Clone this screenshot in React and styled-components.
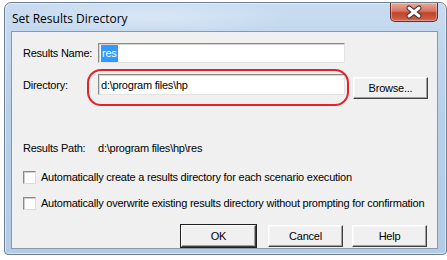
import styled, { createGlobalStyle } from "styled-components";

const GlobalStyle = createGlobalStyle`
    body {
        margin: 0;
        background: #ffffff;
        font-family: 'Liberation Sans', Arial, sans-serif;
    }
`

export default function App() {
    return (
        <Desktop>
            <GlobalStyle />
            <Window>
                <TitleBar>
                    <Title>Set Results Directory</Title>
                    <CloseButton>
                        <svg width="46" height="18" viewBox="0 0 46 18">
                            <path d="M18 5 L28 13 M28 5 L18 13" stroke="#3b2a2a" strokeWidth="5" strokeLinecap="round" />
                            <path d="M18 5 L28 13 M28 5 L18 13" stroke="#ffffff" strokeWidth="3" strokeLinecap="round" />
                        </svg>
                    </CloseButton>
                </TitleBar>
                <Content>
                    <Form>
                        <Label>Results Name:</Label>
                        <TextBox>
                            <Selected>res</Selected>
                        </TextBox>
                        <span />

                        <Label>Directory:</Label>
                        <Highlighted>
                            <TextBox>d:\program files\hp</TextBox>
                            <Ring />
                        </Highlighted>
                        <Button width={75} top={3} left={8}>Browse...</Button>
                    </Form>

                    <PathRow>
                        <PathLabel>Results Path:</PathLabel>
                        <span>d:\program files\hp\res</span>
                    </PathRow>

                    <Option top={16}>
                        <CheckBox />
                        Automatically create a results directory for each scenario execution
                    </Option>
                    <Option top={13}>
                        <CheckBox />
                        Automatically overwrite existing results directory without prompting for confirmation
                    </Option>

                    <Buttons>
                        <Button width={75} isDefault>OK</Button>
                        <Button width={75} left={12}>Cancel</Button>
                        <Button width={75} left={9}>Help</Button>
                    </Buttons>
                </Content>
            </Window>
        </Desktop>
    );
}

const Desktop = styled.div`
    width: 447px;
    height: 260px;
    overflow: hidden;
    box-sizing: border-box;
    padding: 2px 0 0 4px;
    background: #ffffff;
`
const Window = styled.div`
    width: 443px;
    height: 253px;
    box-sizing: border-box;
    display: flex;
    flex-direction: column;
    padding: 0 8px 5px 6px;
    border: 1px solid #6d7e92;
    border-radius: 7px 7px 4px 4px;
    background:
        radial-gradient(ellipse 140px 18px at 150px 14px, rgba(255,255,255,0.35), transparent),
        linear-gradient(180deg, #c8dcf1 0%, #b9d0e9 40%, #b3cbe5 100%);
    box-shadow: inset 0 0 0 1px rgba(255,255,255,0.5);
`
const TitleBar = styled.div`
    height: 28px;
    display: flex;
    justify-content: space-between;
    align-items: flex-start;
`
const Title = styled.div`
    margin: 7px 0 0 1px;
    font-family: 'Open Sans', 'Noto Sans', sans-serif;
    font-size: 12px;
    color: #000000;
`
const CloseButton = styled.div`
    width: 46px;
    height: 18px;
    border: 1px solid #6b2a22;
    border-top: none;
    border-radius: 0 0 5px 5px;
    background: linear-gradient(180deg, #e9a99a 0%, #d8735f 45%, #c0432c 55%, #d0664f 100%);
    box-shadow: inset 0 0 0 1px rgba(255,255,255,0.35);
    display: flex;
    align-items: center;
    justify-content: center;
    svg { display: block; }
`
const Content = styled.div`
    flex: 1;
    display: flex;
    flex-direction: column;
    background: #f0f0f0;
    border: 1px solid #8799b0;
    padding: 11px 10px 0 11px;
    font-size: 11px;
    letter-spacing: -0.23px;
    color: #000000;
`
const Form = styled.div`
    display: grid;
    grid-template-columns: 75px 247px auto;
    grid-template-rows: 20px 21px;
    row-gap: 11px;
    align-items: center;
`
const Label = styled.span`
    white-space: nowrap;
`
const TextBox = styled.div`
    height: 100%;
    box-sizing: border-box;
    display: flex;
    align-items: center;
    padding-left: 2px;
    background: #ffffff;
    border: 1px solid;
    border-color: #8a8a8a #e3e3e3 #e3e3e3 #8a8a8a;
    box-shadow: inset 1px 1px 0 #d6d6d6;
    white-space: nowrap;
`
const Selected = styled.span`
    background: #3399ff;
    color: #ffffff;
    height: 17px;
    line-height: 17px;
    padding: 0 1px;
`
const Highlighted = styled.div`
    position: relative;
    height: 100%;
`
const Ring = styled.div`
    position: absolute;
    top: -5px;
    bottom: -11px;
    left: -11px;
    right: -4px;
    border: 2px solid #e0242c;
    border-radius: 14px;
    pointer-events: none;
`
const Button = styled.div`
    width: ${p => p.width}px;
    height: 22px;
    box-sizing: border-box;
    margin-top: ${p => p.top || 0}px;
    margin-left: ${p => p.left || 0}px;
    align-self: start;
    display: flex;
    align-items: center;
    justify-content: center;
    background: #f0f0f0;
    border: 1px solid;
    border-color: #ffffff #404040 #404040 #ffffff;
    box-shadow: ${p => p.isDefault
        ? "0 0 0 1px #202020, inset -1px -1px 0 #a0a0a0"
        : "inset -1px -1px 0 #a0a0a0, inset 1px 1px 0 #f8f8f8"};
    font-size: 11px;
`
const PathRow = styled.div`
    display: flex;
    margin-top: 47px;
    line-height: 13px;
`
const PathLabel = styled.span`
    width: 75px;
`
const Option = styled.label`
    display: flex;
    align-items: center;
    gap: 5px;
    margin-top: ${p => p.top}px;
    line-height: 13px;
    white-space: nowrap;
`
const CheckBox = styled.span`
    flex-shrink: 0;
    width: 13px;
    height: 13px;
    box-sizing: border-box;
    background: #ffffff;
    border: 1px solid;
    border-color: #8a8a8a #dcdcdc #dcdcdc #8a8a8a;
    box-shadow: inset 1px 1px 0 #cfcfcf;
`
const Buttons = styled.div`
    display: flex;
    justify-content: flex-end;
    margin-top: 15px;
`
